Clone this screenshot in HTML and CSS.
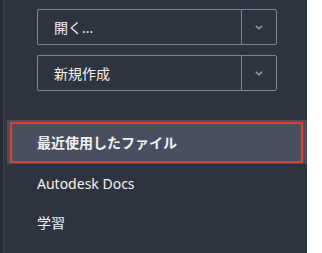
FILE: index.html
```html
<!DOCTYPE html>
<html lang="ja">

<head>
  <meta charset="utf-8" />
  <title>ホーム</title>
  <link rel="stylesheet" href="styles.css">
</head>

<body>
  <div class="panel">
    <div class="panel-inner">
      <div class="acciones">
        <div class="split-button">
          <button class="split-main" type="button">開く...</button>
          <button class="split-arrow" type="button" aria-label="その他">
            <svg width="8" height="5" viewBox="0 0 8 5">
              <path d="M0.8 0.8 L4 3.8 L7.2 0.8" fill="none" stroke="#9aa3b1" stroke-width="1.4" />
            </svg>
          </button>
        </div>
        <div class="split-button">
          <button class="split-main" type="button">新規作成</button>
          <button class="split-arrow" type="button" aria-label="その他">
            <svg width="8" height="5" viewBox="0 0 8 5">
              <path d="M0.8 0.8 L4 3.8 L7.2 0.8" fill="none" stroke="#9aa3b1" stroke-width="1.4" />
            </svg>
          </button>
        </div>
      </div>

      <ul class="nav">
        <li class="nav-item activo">最近使用したファイル</li>
        <li class="nav-item">Autodesk Docs</li>
        <li class="nav-item">学習</li>
      </ul>
    </div>
  </div>
</body>

</html>
```

FILE: styles.css
```css
body {
  margin: 0;
  background-color: #fff;
  font-family: "Noto Sans", "Noto Sans CJK JP", sans-serif;
}

.panel {
  width: 304px;
  height: 253px;
  background-color: #2e3340;
  border-left: 3px solid #252933;
}

.panel-inner {
  height: 100%;
  border-left: 1px solid #3c4250;
}

.acciones {
  display: flex;
  flex-direction: column;
  gap: 10px;
  padding: 9px 0 0 33px;
}

.split-button {
  display: flex;
  width: 240px;
  height: 36px;
}

.split-button button {
  background-color: transparent;
  border: 1px solid #7b8597;
  border-radius: 2px;
  color: #f2f2f2;
  font-family: inherit;
  padding: 0;
}

.split-main {
  flex: 1;
  text-align: left;
  padding-left: 16px !important;
  font-size: 14px;
  border-right: none !important;
  border-radius: 2px 0 0 2px !important;
}

.split-arrow {
  width: 36px;
  display: flex;
  align-items: center;
  justify-content: center;
  border-radius: 0 2px 2px 0 !important;
}

.nav {
  list-style: none;
  margin: 29px 0 0;
  padding: 0;
}

.nav-item {
  height: 40px;
  display: flex;
  align-items: center;
  padding-left: 33px;
  color: #f2f2f2;
  font-size: 14px;
}

.activo + .nav-item {
  height: 38px;
}

.activo {
  position: relative;
  height: 44px;
  margin-left: 3px;
  padding-left: 30px;
  background-color: #474f61;
  font-weight: bold;
}

.activo::after {
  content: "";
  position: absolute;
  top: 2px;
  left: 3px;
  right: 4px;
  bottom: 1px;
  border: 2px solid #e2402d;
}
```
